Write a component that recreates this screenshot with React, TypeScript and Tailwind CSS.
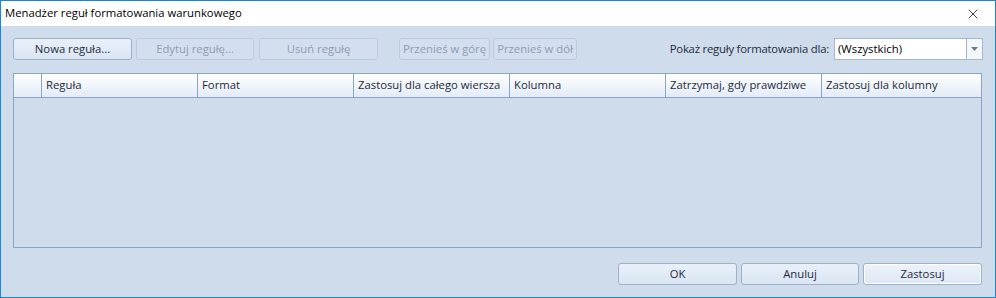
import { X } from "lucide-react";

const COLUMNS = [
  { label: "", w: "w-[28px]" },
  { label: "Reguła", w: "w-[156px]" },
  { label: "Format", w: "w-[156px]" },
  { label: "Zastosuj dla całego wiersza", w: "w-[156px]" },
  { label: "Kolumna", w: "w-[156px]" },
  { label: "Zatrzymaj, gdy prawdziwe", w: "w-[156px]" },
  { label: "Zastosuj dla kolumny", w: "flex-1" },
];

function Btn({ label, w, disabled, focused }: { label: string; w: string; disabled?: boolean; focused?: boolean }) {
  const look = disabled
    ? "border-[#bccadd] bg-[#d3dfee] text-[#8e9cb2]"
    : focused
      ? "border-[#9fb1ca] bg-gradient-to-b from-[#edf3fb] to-[#dde7f4] text-[#1e2a3c] shadow-[inset_0_0_0_1px_#ffffff]"
      : "border-[#9fb1ca] bg-gradient-to-b from-[#e8f0fa] to-[#dae5f3] text-[#1e2a3c]";
  return (
    <div className={`${w} h-[22px] rounded-[3px] border flex items-center justify-center whitespace-nowrap ${look}`}>
      {label}
    </div>
  );
}

export default function App() {
  return (
    <div
      className="w-[996px] h-[298px] border border-[#1a84d6] bg-[#cfdcec] flex flex-col text-[11.3px] text-[#1e2a3c] whitespace-nowrap"
      style={{ fontFamily: '"Segoe UI", "Open Sans", sans-serif' }}
    >
      {/* title bar */}
      <div className="h-[25px] bg-white flex items-center justify-between pl-[4px] pr-[14px] text-black text-[11.3px]">
        <span>Menadżer reguł formatowania warunkowego</span>
        <X size={16} strokeWidth={1.2} color="#111" />
      </div>

      <div className="flex-1 flex flex-col px-[12px] pt-[12px] pb-[12px]">
        {/* toolbar */}
        <div className="flex items-center h-[22px]">
          <Btn label="Nowa reguła..." w="w-[119px]" />
          <div className="w-[4px]" />
          <Btn label="Edytuj regułę..." w="w-[118px]" disabled />
          <div className="w-[5px]" />
          <Btn label="Usuń regułę" w="w-[119px]" disabled />
          <div className="w-[21px]" />
          <Btn label="Przenieś w górę" w="w-[91px]" disabled />
          <div className="w-[3px]" />
          <Btn label="Przenieś w dół" w="w-[84px]" disabled />
          <div className="flex-1" />
          <span className="mr-[5px] tracking-[-0.2px]">Pokaż reguły formatowania dla:</span>
          <div className="w-[149px] h-[22px] bg-white border border-[#a6b8cf] flex">
            <span className="flex-1 flex items-center pl-[3px] text-black">(Wszystkich)</span>
            <div className="w-[16px] border-l border-[#a6b8cf] bg-[#f4f7fb] flex items-center justify-center">
              <svg width="7" height="4" viewBox="0 0 7 4">
                <path d="M0 0h7L3.5 4z" fill="#6b7a8e" />
              </svg>
            </div>
          </div>
        </div>

        {/* grid */}
        <div className="mt-[13px] mr-[1px] h-[175px] border border-[#8aa3c6] flex flex-col">
          <div className="h-[24px] flex bg-gradient-to-b from-[#ffffff] to-[#e2ebf7] border-b border-[#8aa3c6]">
            {COLUMNS.map((c, i) => (
              <div
                key={i}
                className={`${c.w} flex items-center pl-[4px] ${i < COLUMNS.length - 1 ? "border-r border-[#8aa3c6]" : ""}`}
              >
                {c.label}
              </div>
            ))}
          </div>
          <div className="flex-1" />
        </div>

        <div className="flex-1" />

        {/* footer */}
        <div className="flex justify-end gap-[4px] pr-[1px]">
          <Btn label="OK" w="w-[119px]" />
          <Btn label="Anuluj" w="w-[118px]" />
          <Btn label="Zastosuj" w="w-[119px]" focused />
        </div>
      </div>
    </div>
  );
}
